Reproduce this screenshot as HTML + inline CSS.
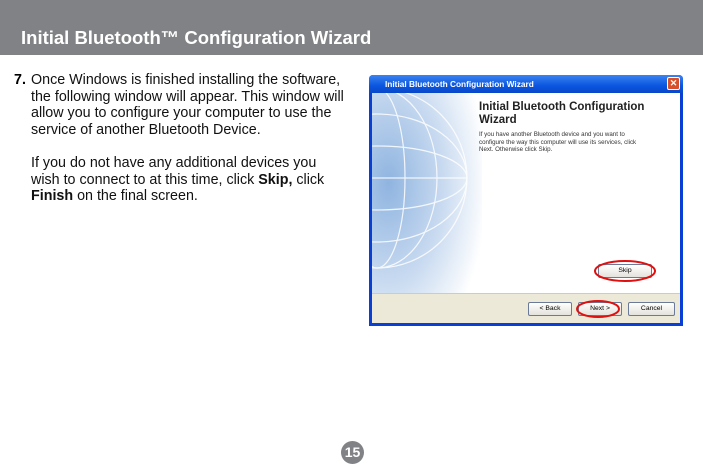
<!DOCTYPE html>
<html><head><meta charset="utf-8"><style>
*{margin:0;padding:0;box-sizing:border-box}
body{width:703px;height:462px;background:#fff;position:relative;overflow:hidden;font-family:"Liberation Sans",sans-serif}
.hdr{position:absolute;left:0;top:0;width:703px;height:55px;background:#808285}
.hdr span{position:absolute;left:21px;top:27px;color:#fff;font-weight:bold;font-size:18.5px}
.txt{position:absolute;left:31px;top:72px;white-space:nowrap;font-size:14.3px;line-height:16.6px;color:#111}
.num{position:absolute;left:14px;top:72px;font-size:14.3px;font-weight:bold;line-height:16.6px}
.pg{position:absolute;left:341px;top:441px;width:23px;height:23px;border-radius:50%;background:#808285;color:#fff;font-weight:bold;font-size:14px;text-align:center;line-height:23px}
.win{position:absolute;left:369px;top:75px;width:314px;height:251px;background:#0a3fd6;border-radius:4px 4px 0 0}
.tb{position:absolute;left:0;top:0;width:314px;height:18px;background:linear-gradient(#3c82f0,#0a56e0 60%,#0a47c8);border-radius:4px 4px 0 0}
.tb span{position:absolute;left:16px;top:4px;color:#fff;font-size:8.3px;font-weight:bold}
.x{position:absolute;right:3px;top:2px;width:13px;height:13px;background:#d8502a;border:1px solid #fff;border-radius:2px;color:#fff;font-size:9px;line-height:11px;text-align:center;font-weight:bold}
.cl{position:absolute;left:3px;top:18px;width:308px;height:230px;background:#fff;overflow:hidden}
.bot{position:absolute;left:0;top:200px;width:308px;height:30px;background:#ece9d8;border-top:1px solid #d0ccb8}
.btn{position:absolute;height:14px;border:1px solid #6a7a98;border-radius:2px;background:linear-gradient(#fff,#e4e2dc);font-size:6.8px;text-align:center;line-height:12px;color:#000}
h1{position:absolute;left:107px;top:8px;font-size:11.5px;line-height:12.5px;color:#222}
.d{position:absolute;left:107px;top:38px;white-space:nowrap;font-size:6.2px;line-height:7.5px;color:#333}
</style></head><body>
<div class="hdr"><span>Initial Bluetooth™ Configuration Wizard</span></div>
<div class="num">7.</div>
<div class="txt">Once Windows is finished installing the software,<br>the following window will appear. This window will<br>allow you to configure your computer to use the<br>service of another Bluetooth Device.<br><br>If you do not have any additional devices you<br>wish to connect to at this time, click <b>Skip,</b> click<br><b>Finish</b> on the final screen.</div>
<div class="win">
<div class="tb"><span>Initial Bluetooth Configuration Wizard</span><div class="x">✕</div></div>
<div class="cl">
<svg width="110" height="200" style="position:absolute;left:0;top:0">
<defs><radialGradient id="g" cx="0.15" cy="0.45" r="0.9"><stop offset="0" stop-color="#8fb4e0"/><stop offset="0.55" stop-color="#c8daf0"/><stop offset="1" stop-color="#fff"/></radialGradient></defs>
<rect width="110" height="200" fill="url(#g)"/>
<g fill="none" stroke="#fff" stroke-width="1.2" opacity="0.85">
<circle cx="5" cy="85" r="90"/><ellipse cx="5" cy="85" rx="60" ry="90"/><ellipse cx="5" cy="85" rx="28" ry="90"/>
<ellipse cx="5" cy="85" rx="90" ry="32"/><ellipse cx="5" cy="85" rx="90" ry="64"/><line x1="-85" y1="85" x2="95" y2="85"/></g>
</svg>
<h1>Initial Bluetooth Configuration<br>Wizard</h1>
<div class="d">If you have another Bluetooth device and you want to<br>configure the way this computer will use its services, click<br>Next. Otherwise click Skip.</div>
<div class="btn" style="left:226px;top:171px;width:54px">Skip</div>
<div class="bot">
<div class="btn" style="left:156px;top:8px;width:44px">&lt; Back</div>
<div class="btn" style="left:206px;top:8px;width:44px">Next &gt;</div>
<div class="btn" style="left:256px;top:8px;width:47px">Cancel</div>
</div>
</div>
</div>
<svg width="703" height="462" style="position:absolute;left:0;top:0">
<ellipse cx="625" cy="271" rx="30" ry="10" fill="none" stroke="#e01010" stroke-width="2"/>
<ellipse cx="598" cy="309" rx="21" ry="8" fill="none" stroke="#e01010" stroke-width="2"/>
</svg>
<div class="pg">15</div>
</body></html>
